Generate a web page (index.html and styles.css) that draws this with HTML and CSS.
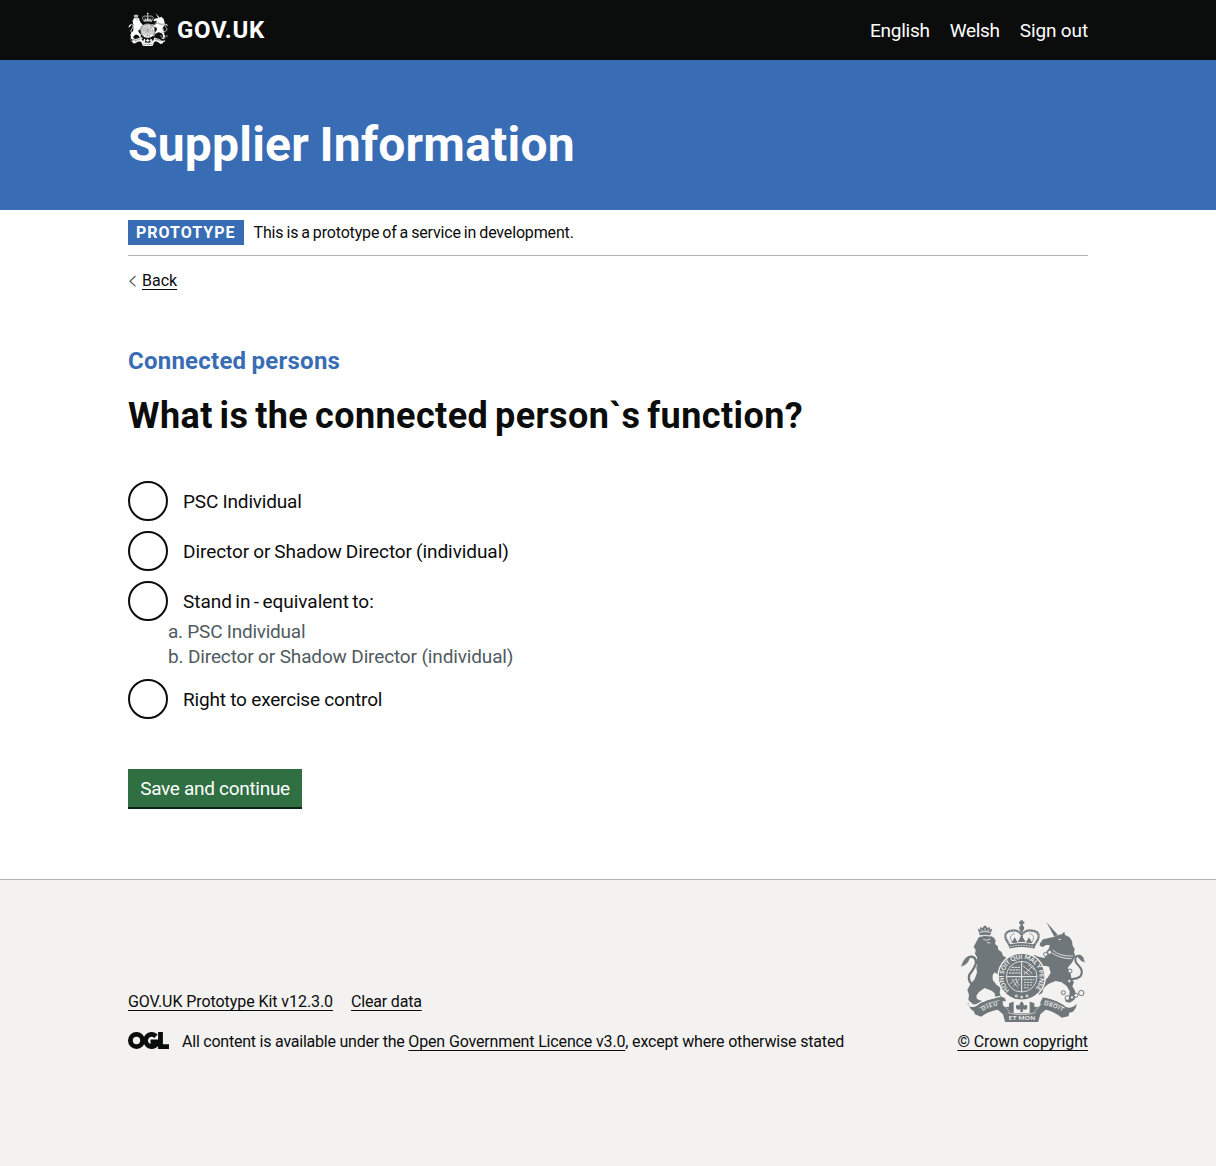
FILE: index.html
```html
<!DOCTYPE html>
<html lang="en">
<head>
<meta charset="utf-8">
<title>What is the connected person`s function?</title>
<link rel="stylesheet" href="styles.css">
</head>
<body>
<svg width="0" height="0" class="sprite" aria-hidden="true">
  <symbol id="crest" viewBox="27 30 375 306">
    <g fill="currentColor">
      <!-- lion -->
      <path d="M86 76l-6-21 7 4 1-8 7 3 4-7h6l4 7 7-3 1 8 7-4-6 21q-16-4-32 0z"/>
      <path d="M84 80q18-7 36-2l9 5 5 9-2 10 8 6 2 11 10 7 4 11 10 6 3 12-12 12-7 18 8-8 14-2 8 8-3 9-9 3-8-5-13 8-16-11-6 8 0 14 12 16 12 8-3 14 3 12 13 6 3 9-21-2-10-4-3-18-9-8-21-8-17 12-8 11 2 10 16 7 5 8-3 3-30-2-14-13 2-16-5-14 8-16 14-17 7-19-2-16 3-9-4-11 4-9-7-12 2-11-6-10z"/>
      <!-- unicorn -->
      <path d="M286 36l34 38-9 8z"/>
      <path d="M311 80l11-5 10-2 8-8 2 10 13 6 8 12 2 14 6 9-2 11 4 11-5 9-4 10-14 16 9 17 2 14 8 13-5 12 8 13 3 15-5 12-14 9-12-3-2-7 13-11 1-14-9-15-15-11-18-4-22 9-14 12-4 14-9 6-7-6 3-13 13-16 17-17 8-14-5-18-12-3-17 6-11 11-8-5 1-9 19-12-10-9-15 8-9-5 1-8 17-9 12 5 19 4 6-20 7-9 2-10-10 0-11 6-9-4 1-7 9-12z"/>
      <!-- ribbon -->
      <path d="M44 280q14 16 30 9 33-22 74-27l8 15q-2 12 8 14l10-1v-10l13-5 25 6 26-6 12 5v10l10 1q10-2 8-14l8-15q44 8 70 29 14 7 32-10-6 27-24 27 2 13-10 12l-12 3q-24-20-48-24l-16 14-7 25q-50 16-98 0l-7-25-16-14q-28 4-50 21l-11-4q-10-2-10-12-15-5-15-24z"/>
      <!-- shield -->
      <circle cx="212" cy="200" r="69"/>
    </g>
    <g fill="none" stroke="currentColor" stroke-linecap="round">
      <path d="M72 228q-24-12-17-34 16-20 20-35 0-18-14-19-13 1-18 14" stroke-width="7"/>
      <path d="M58 138q-21 5-27 31 18-5 24-22z" fill="currentColor" stroke-width="1"/>
      <path d="M354 206q22 4 35-8 9-15-5-30-16-14-9-28 12-8 20 5" stroke-width="6"/>
      <path d="M378 138q16-4 23 18-13-3-18-12z" fill="currentColor" stroke-width="1"/>
    </g>
    <!-- crown -->
    <g fill="none" stroke="currentColor">
      <path d="M177 106q-25-31-5-41 26-10 39 8M249 106q25-31 5-41-26-10-41 8" stroke-width="7" stroke-dasharray="7 1"/>
      <path d="M184 98q-14-24 8-27M242 98q14-24-8-27" stroke-width="3" stroke-dasharray="4 2"/>
      <path d="M212 60v36" stroke-width="7" stroke-dasharray="7 1"/>
      <path d="M174 110q39-10 78 0" stroke-width="12"/>
      <path d="M184 99l7-13 7 12M202 96l10-16 10 16M227 98l7-12 8 13" fill="currentColor" stroke-width="4"/>
      <path d="M212 31v17M204 38h16" stroke-width="7"/>
      <circle cx="212" cy="54" r="4" stroke-width="7"/>
    </g>
    <g fill="none" stroke="var(--paper)">
      <circle cx="212" cy="200" r="71" stroke-width="4"/>
      <circle cx="212" cy="200" r="46" stroke-width="2.500"/>
      <path d="M212 154v92M167 200h90" stroke-width="3"/>
      <path d="M182 172h26M176 180h32M174 189h34M217 168l28 24M218 184l18 11M232 164l18 15M219 193l27-25" stroke-width="3" stroke-dasharray="7 2"/>
      <path d="M183 207l17 26M194 207l11 20M206 206l-20 24M197 205l-21 18M218 209h32M219 217h28M219 225h24M219 233h14" stroke-width="2.500" stroke-dasharray="7 2"/>
      <path d="M177 110q35-8 70 0" stroke-width="2.500" stroke-dasharray="5 3"/>
      <path d="M85 67q16-5 34 0M97 88l10 3 11-4M108 98l10 1M84 80q16-6 36-2M92 58l2 6M102 55v7M112 58l-2 6" stroke-width="2.500"/>
      <path d="M305 120q20 20 61 18M303 129q24 17 59 17M322 88l8 1" stroke-width="2.500"/>
      <path d="M46 279q14 14 28 7 33-22 74-27M275 259q45 8 71 29 14 6 30-9" stroke-width="4"/>
      <path d="M84 294q28-19 62-23M343 295q-27-18-60-24M154 281l22 24M272 281l-22 24" stroke-width="1.500"/>
      <circle cx="196" cy="258" r="3" stroke-width="3"/><circle cx="212" cy="261" r="3" stroke-width="3"/><circle cx="228" cy="258" r="3" stroke-width="3"/>
      <path d="M170 308q42 12 84 0" stroke-width="2"/>
    </g>
    <g fill="var(--paper)" stroke="currentColor" stroke-width="3">
      <circle cx="284" cy="133" r="6"/><circle cx="296" cy="127" r="6"/>
      <circle cx="357" cy="183" r="6"/><circle cx="355" cy="213" r="5"/>
      <circle cx="337" cy="248" r="6"/><circle cx="349" cy="264" r="7"/>
      <circle cx="391" cy="249" r="8"/><circle cx="375" cy="256" r="6"/><circle cx="363" cy="262" r="5"/>
    </g>
    <path d="M188 276h48v34h-48z" fill="var(--paper)"/>
    <path d="M208 306v-8q-14 4-13-9 2-9 10-2 0-8 7-13 7 5 7 13 8-7 10 2 1 13-13 9v8z" fill="currentColor"/>
    <path id="garter" d="M176 241A54 54 0 1 1 248 241" fill="none"/>
    <path id="left-scroll" d="M88 308Q115 290 156 283" fill="none"/>
    <path id="right-scroll" d="M270 284Q310 290 346 310" fill="none"/>
    <g class="motto">
      <text font-size="19"><textPath href="#garter" textLength="252">HONI SOIT QUI MAL Y PENSE</textPath></text>
      <text font-size="17"><textPath href="#left-scroll" startOffset="9" textLength="48">DIEU</textPath></text>
      <text font-size="17"><textPath href="#right-scroll" startOffset="8" textLength="60">DROIT</textPath></text>
      <text x="173" y="330" font-size="19" textLength="79">ET MON</text>
    </g>
  </symbol>
</svg>

<header class="header">
  <div class="container header-row">
    <a class="brand" href="#"><svg class="brand-crest" aria-hidden="true"><use href="#crest"/></svg><span class="brand-name">GOV.UK</span></a>
    <nav class="nav"><a class="nav-english" href="#">English</a><a class="nav-welsh" href="#">Welsh</a><a class="nav-signout" href="#">Sign out</a></nav>
  </div>
</header>
<div class="masthead"><div class="container"><p class="masthead-title">Supplier Information</p></div></div>

<div class="container">
  <div class="phase"><strong class="tag">PROTOTYPE</strong><span class="phase-text">This is a prototype of a service in development.</span></div>
  <a class="back" href="#"><svg width="14" height="12" viewBox="0 0 14 12" aria-hidden="true"><path d="M7.500 1L2 6.200l5.500 5.200" fill="none" stroke="#505a5f" stroke-width="1.200"/></svg><span class="link">Back</span></a>
  <main class="main">
    <h2 class="caption">Connected persons</h2>
    <h1 class="title">What is the connected person`s function?</h1>
    <form>
      <label class="radio"><input type="radio" name="function"><span>PSC Individual</span></label>
      <label class="radio"><input type="radio" name="function"><span class="label-director">Director or Shadow Director (individual)</span></label>
      <label class="radio with-hint"><input type="radio" name="function"><span class="label-standin">Stand in - equivalent to:</span></label>
      <div class="hint"><span class="hint-a">a. PSC Individual</span><br>b. Director or Shadow Director (individual)</div>
      <label class="radio"><input type="radio" name="function"><span>Right to exercise control</span></label>
      <button class="button" type="button">Save and continue</button>
    </form>
  </main>
</div>

<footer class="footer">
  <div class="container footer-row">
    <div class="footer-main">
      <div class="footer-links"><a class="link kit-link" href="#">GOV.UK Prototype Kit v12.3.0</a><a class="link clear-link" href="#">Clear data</a></div>
      <div class="licence">
        <svg width="41" height="17" viewBox="0 0 41 17" aria-hidden="true"><g fill="none" stroke="#0b0c0c" stroke-width="4.800"><circle cx="8.500" cy="8.500" r="6.100"/><path d="M28 4.200A6.100 6.100 0 1 0 28.500 12.200V10H22.500M32.500 0V14.600H41"/></g></svg>
        <span><span class="licence-intro">All content is available under the </span><a class="link licence-link" href="#">Open Government Licence v3.0</a><span class="licence-end">, except where otherwise stated</span></span>
      </div>
    </div>
    <a class="copyright" href="#"><svg class="footer-crest" aria-hidden="true"><use href="#crest"/></svg><span class="link">© Crown copyright</span></a>
  </div>
</footer>
</body>
</html>
```
FILE: styles.css
```css
* { box-sizing: border-box; }
body { margin: 0; background: #fff; color: #0b0c0c; font: 16px/20px Roboto, "Liberation Sans", sans-serif; }
a { color: inherit; text-decoration: none; }
h1, h2, p { margin: 0; }
.sprite { position: absolute; }
.container { width: 960px; margin: 0 auto; }
.motto { fill: var(--paper); font-family: Lato, sans-serif; font-weight: 700; }
.link { text-decoration: underline 1px; text-underline-offset: 3px; text-decoration-skip-ink: none; }

.header { height: 60px; background: #0b0c0c; color: #fff; --paper: #0b0c0c; }
.header-row { display: flex; justify-content: space-between; align-items: center; height: 60px; }
.brand { display: flex; align-items: center; gap: 9px; }
.brand-crest { width: 40px; height: 34px; margin-top: -2px; }
.brand-name { font-size: 24px; font-weight: 700; letter-spacing: .7px; }
.nav { display: flex; gap: 20px; font-size: 19px; padding-top: 2px; }
.nav-english { letter-spacing: -.26px; }
.nav-welsh { letter-spacing: -.3px; }
.nav-signout { letter-spacing: -.13px; }

.masthead { height: 150px; padding-top: 57px; background: #386db5; color: #fff; }
.masthead-title { font-size: 48px; line-height: 56px; font-weight: 700; letter-spacing: .2px; word-spacing: -1.5px; }

.phase { display: flex; align-items: center; gap: 10px; height: 46px; border-bottom: 1px solid #b1b4b6; }
.phase-text { padding-top: 1px; letter-spacing: -.16px; word-spacing: -.8px; }
.tag { height: 25px; padding: 0 8px; line-height: 25px; background: #386db5; color: #fff; letter-spacing: 1px; }
.back { display: flex; align-items: center; width: max-content; margin-top: 15px; }

.main { padding: 55px 0 70px; }
.caption { color: #386db5; font-size: 24px; line-height: 30px; font-weight: 700; letter-spacing: .24px; word-spacing: -1px; }
.title { margin-top: 20px; font-size: 36px; line-height: 40px; font-weight: 700; letter-spacing: .4px; word-spacing: -2.5px; }
form { padding-top: 45px; }
.radio { display: flex; align-items: center; gap: 15px; height: 40px; margin-bottom: 10px; font-size: 19px; line-height: 25px; letter-spacing: -.19px; }
.radio input { appearance: none; width: 40px; height: 40px; margin: 0; border: 2px solid #0b0c0c; border-radius: 50%; background: #fff; }
.label-director { letter-spacing: -.07px; word-spacing: -.6px; }
.label-standin { letter-spacing: -.04px; word-spacing: -1.2px; }
.with-hint { margin-bottom: 0; }
.hint { margin: -2px 0 10px 40px; color: #505a5f; font-size: 19px; line-height: 25px; letter-spacing: -.14px; }
.hint-a { letter-spacing: -.24px; }
.button { display: block; width: 174px; height: 40px; margin-top: 50px; padding: 1px 0; border: 0; background: #2f6f42; color: #fff; box-shadow: inset 0 -2px #0e2415; font: 19px/20px Roboto, "Liberation Sans", sans-serif; letter-spacing: -.3px; }

.footer { height: 287px; padding-top: 40px; border-top: 1px solid #b1b4b6; background: #f3f2f1; --paper: #f3f2f1; }
.footer-row { display: flex; justify-content: space-between; align-items: flex-end; }
.footer-links { display: flex; gap: 18px; margin-bottom: 20px; }
.kit-link { letter-spacing: -.07px; }
.clear-link { letter-spacing: -.18px; }
.licence { display: flex; gap: 13px; }
.licence-intro { letter-spacing: -.225px; }
.licence-link { letter-spacing: -.146px; }
.licence-end { letter-spacing: -.18px; }
.copyright { display: flex; flex-direction: column; align-items: center; gap: 10px; letter-spacing: -.11px; }
.footer-crest { width: 125px; height: 102px; color: #6f777b; }
```
